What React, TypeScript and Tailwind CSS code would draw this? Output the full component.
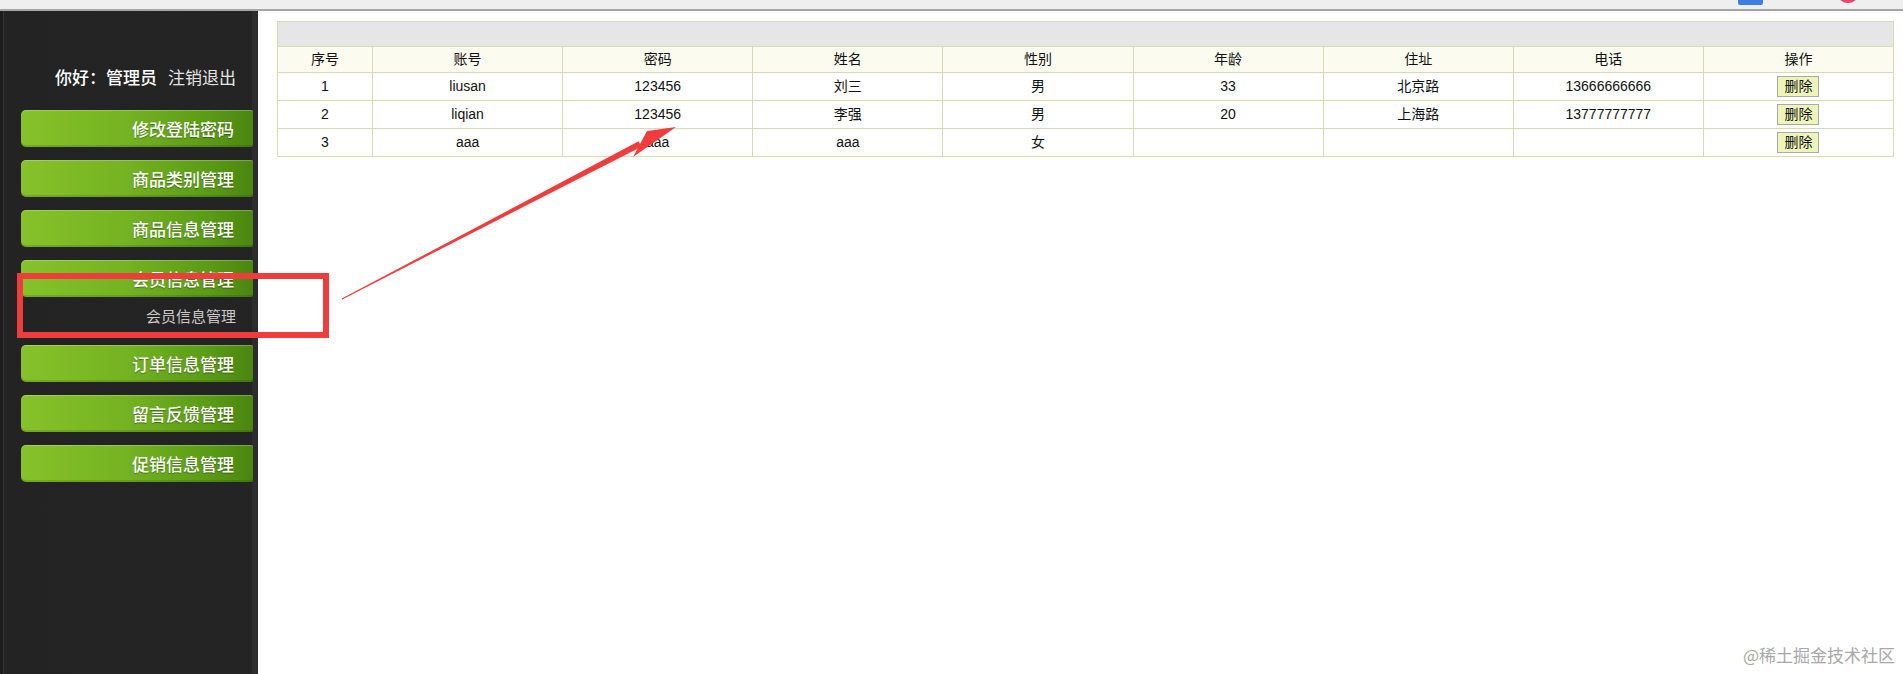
import React from "react";

const menu = [
  "修改登陆密码",
  "商品类别管理",
  "商品信息管理",
  "会员信息管理",
  "订单信息管理",
  "留言反馈管理",
  "促销信息管理",
];

const headers = ["序号", "账号", "密码", "姓名", "性别", "年龄", "住址", "电话", "操作"];

const rows = [
  ["1", "liusan", "123456", "刘三", "男", "33", "北京路", "13666666666"],
  ["2", "liqian", "123456", "李强", "男", "20", "上海路", "13777777777"],
  ["3", "aaa", "aaa", "aaa", "女", "", "", ""],
];

function MenuButton({ label }: { label: string }) {
  return (
    <div className="h-[37px] w-[232px] rounded-l-[5px] rounded-r-[2px] bg-[linear-gradient(to_right,#86c22a_0%,#74b321_45%,#5b9c16_80%,#4a8610_100%)] shadow-[inset_0_1px_0_rgba(255,255,255,0.25),inset_0_-2px_0_rgba(0,0,0,0.12)] flex items-center justify-end pr-[19px] text-[17px] font-medium text-white [text-shadow:0_1px_1px_rgba(0,0,0,0.35)]">
      {label}
    </div>
  );
}

export default function App() {
  return (
    <div className="relative w-[1903px] h-[674px] overflow-hidden bg-white [font-family:'Liberation_Sans','Noto_Sans_CJK_SC',sans-serif]">
      {/* top browser strip */}
      <div className="h-[11px] bg-[#efefef] border-b-2 border-[#a6a6a6]" />

      <div className="flex h-[663px]">
        {/* sidebar */}
        <aside className="w-[258px] shrink-0 flex flex-col bg-[linear-gradient(to_right,#1c1c1c_0px,#1c1c1c_3px,#353535_3px,#353535_4px,#232323_4px,#242424_252px,#2d2d2d_252px,#2d2d2d_258px)] [font-family:'Noto_Sans_CJK_SC',sans-serif]">
          <div className="mt-[55px] h-[20px] flex items-center justify-end pr-[22px] text-[17px] leading-none">
            <span className="text-white font-medium">你好：管理员</span>
            <span className="ml-[11px] text-[#e4e4e4]">注销退出</span>
          </div>
          <div className="mt-[24px] pl-[21px] flex flex-col">
            {menu.map((m) =>
              m === "会员信息管理" ? (
                <div key={m} className="flex flex-col">
                  <MenuButton label={m} />
                  <div className="h-[38px] w-[232px] flex items-center justify-end pr-[17px] text-[15px] text-[#c9c9c9] mb-[10px]">
                    会员信息管理
                  </div>
                </div>
              ) : (
                <div key={m} className="mb-[13px]">
                  <MenuButton label={m} />
                </div>
              )
            )}
          </div>
        </aside>

        {/* content */}
        <main className="flex-1 pl-[19px] pr-[9px] pt-[10px]">
          <table className="w-full table-fixed border-collapse text-[14px] text-[#111]">
            <colgroup>
              <col className="w-[95px]" />
              <col />
              <col />
              <col />
              <col />
              <col />
              <col />
              <col />
              <col />
            </colgroup>
            <tbody>
              <tr>
                <td colSpan={9} className="h-[25px] bg-[#e6e6e6] border border-[#d6dab6]" />
              </tr>
              <tr>
                {headers.map((h) => (
                  <td key={h} className="h-[26px] p-0 bg-[#fbfbef] border border-[#d6dab6] text-center align-middle">
                    {h}
                  </td>
                ))}
              </tr>
              {rows.map((r) => (
                <tr key={r[0]}>
                  {r.map((c, i) => (
                    <td key={i} className="h-[28px] p-0 border border-[#d6dab6] text-center align-middle">
                      {c}
                    </td>
                  ))}
                  <td className="h-[28px] p-0 border border-[#d6dab6] text-center align-middle">
                    <span className="inline-flex items-center justify-center h-[21px] px-[6px] border border-[#a9a9a9] bg-[#eef5b8] text-[14px] leading-none text-[#111]">
                      删除
                    </span>
                  </td>
                </tr>
              ))}
            </tbody>
          </table>
        </main>
      </div>

      {/* cut-off toolbar items top right */}
      <div className="absolute left-[1738px] top-[-10px] w-[25px] h-[15px] rounded-[2px] bg-[#3f7fe3]" />
      <div className="absolute left-[1838px] top-[-15px] w-[20px] h-[18px] rounded-full bg-[#e8476a]" />

      {/* red annotation rectangle */}
      <div className="absolute left-[17px] top-[273px] w-[312px] h-[65px] border-[6px] border-[#ef3d3d] pointer-events-none" />

      {/* red arrow */}
      <svg className="absolute left-0 top-0 pointer-events-none" width="1903" height="674" viewBox="0 0 1903 674">
        <polygon points="341.8,298.6 638.6,141.3 641.4,146.7 342.2,299.4" fill="#ef3d3d" />
        <polygon points="676,127 647,131 633,157" fill="#ef3d3d" />
      </svg>

      {/* watermark */}
      <div className="absolute right-[8px] bottom-[7px] text-[17px] text-[#a8a8a8] [font-family:'Noto_Sans_CJK_SC',sans-serif]">
        @稀土掘金技术社区
      </div>
    </div>
  );
}
